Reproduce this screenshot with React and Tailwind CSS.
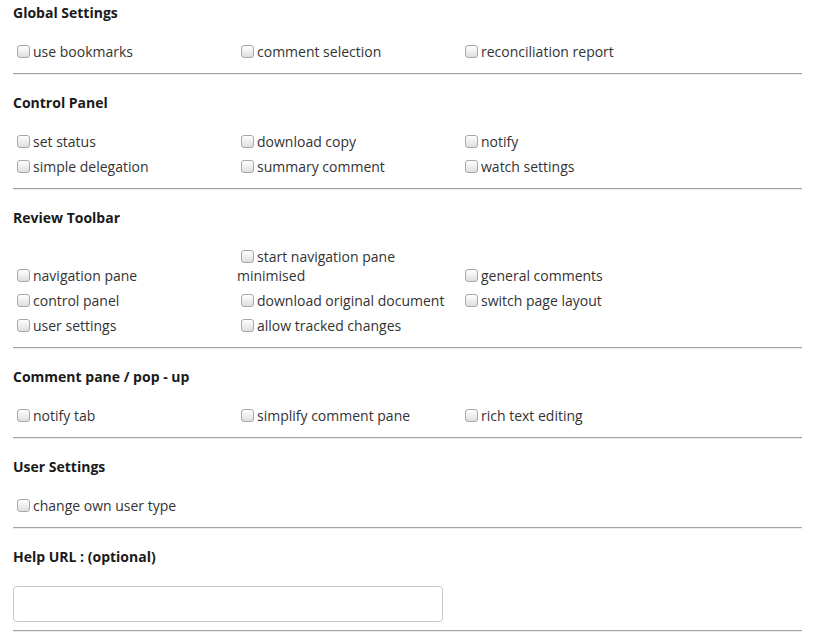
const sections = [
  { title: 'Global Settings', items: ['use bookmarks', 'comment selection', 'reconciliation report'] },
  {
    title: 'Control Panel',
    items: ['set status', 'download copy', 'notify', 'simple delegation', 'summary comment', 'watch settings']
  },
  {
    title: 'Review Toolbar',
    items: [
      'navigation pane', 'start navigation pane minimised', 'general comments',
      'control panel', 'download original document', 'switch page layout',
      'user settings', 'allow tracked changes'
    ]
  },
  { title: 'Comment pane / pop - up', items: ['notify tab', 'simplify comment pane', 'rich text editing'] },
  { title: 'User Settings', items: ['change own user type'] },
]

const Rule = () => (
  <div className="mt-[12px] border-t border-[#a3a3a3] border-b border-b-[#ececec]" />
)

const Check = ({ label }) => (
  <label className="block text-[14px] leading-[19px] text-[#333] pr-[8px]">
    <span className="inline-block w-[13px] h-[13px] ml-[4px] mr-[3px] align-[-1px] rounded-[3px] border border-[#a8a8a8] bg-gradient-to-b from-white to-[#dedede]" />
    {label}
  </label>
)

const Section = ({ title, items }) => (
  <div className="pt-[18px] first:pt-[3px]">
    <div className="text-[14px] leading-[20px] font-bold text-[#1a1a1a]">{title}</div>
    <div className="mt-[19px] grid grid-cols-[224px_224px_224px] gap-y-[6px] items-end">
      {items.map(item => <Check key={item} label={item} />)}
    </div>
    <Rule />
  </div>
)

const App = () => {
  return (
    <div className="w-[816px] h-[640px] bg-white overflow-hidden" style={{ fontFamily: '"Open Sans", "Liberation Sans", sans-serif' }}>
      <div className="ml-[13px] w-[789px]">
        {sections.map(s => <Section key={s.title} {...s} />)}

        {/* Help URL */}
        <div className="pt-[18px]">
          <div className="text-[14px] leading-[20px] font-bold text-[#1a1a1a]">Help URL : (optional)</div>
          <input type="text" className="mt-[19px] block w-[430px] h-[36px] rounded-[4px] border border-[#c4c8cc] bg-white px-3 outline-none" />
          <div className="mt-[8px] border-t border-[#a3a3a3] border-b border-b-[#ececec]" />
        </div>
      </div>
    </div>
  )
}

export default App
